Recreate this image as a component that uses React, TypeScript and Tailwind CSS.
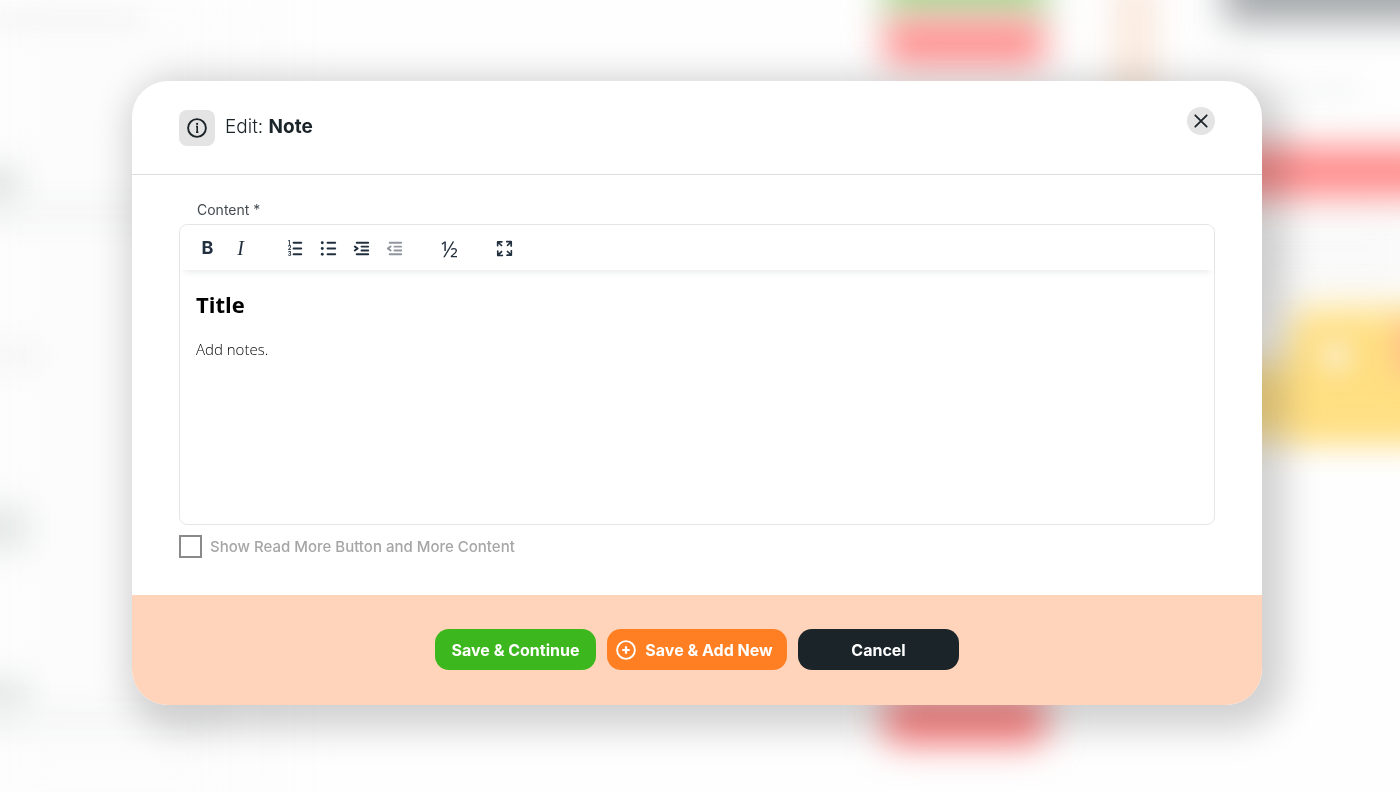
import React, { useState } from "react";

const Icon = ({ children }: { children: React.ReactNode }) => (
  <svg viewBox="0 0 24 24" className="size-[23px] fill-current" aria-hidden="true">
    {children}
  </svg>
);

function ToolButton({
  label,
  disabled,
  children,
}: {
  label: string;
  disabled?: boolean;
  children: React.ReactNode;
}) {
  return (
    <button
      type="button"
      aria-label={label}
      disabled={disabled}
      className="flex h-8 w-[33px] items-center justify-center rounded text-[#222f3e] disabled:opacity-50"
    >
      {children}
    </button>
  );
}

function Toolbar() {
  return (
    <div
      role="toolbar"
      className="flex h-[45px] items-center gap-[22px] rounded-t-lg px-[11px] pt-px shadow-[0_6px_6px_-4px_rgba(34,47,62,0.1)]"
    >
      <div className="flex">
        <ToolButton label="Bold">
          <span className="text-lg font-bold">B</span>
        </ToolButton>
        <ToolButton label="Italic">
          <span className="font-['Liberation_Serif',serif] text-xl italic">I</span>
        </ToolButton>
      </div>
      <div className="flex">
        <ToolButton label="Numbered list">
          <Icon>
            <path d="M10 17h8c.6 0 1 .4 1 1s-.4 1-1 1h-8a1 1 0 0 1 0-2Zm0-6h8c.6 0 1 .4 1 1s-.4 1-1 1h-8a1 1 0 0 1 0-2Zm0-6h8c.6 0 1 .4 1 1s-.4 1-1 1h-8a1 1 0 1 1 0-2Z" />
            <g fontSize="6" fontWeight="700">
              <text x="4" y="8">1</text>
              <text x="4" y="14">2</text>
              <text x="4" y="20">3</text>
            </g>
          </Icon>
        </ToolButton>
        <ToolButton label="Bullet list">
          <Icon>
            <path d="M11 5h8c.6 0 1 .4 1 1s-.4 1-1 1h-8a1 1 0 0 1 0-2Zm0 6h8c.6 0 1 .4 1 1s-.4 1-1 1h-8a1 1 0 0 1 0-2Zm0 6h8c.6 0 1 .4 1 1s-.4 1-1 1h-8a1 1 0 0 1 0-2Z" />
            <circle cx="5.5" cy="6" r="1.5" />
            <circle cx="5.5" cy="12" r="1.5" />
            <circle cx="5.5" cy="18" r="1.5" />
          </Icon>
        </ToolButton>
        <ToolButton label="Increase indent">
          <Icon>
            <path d="M7 5h12c.6 0 1 .4 1 1s-.4 1-1 1H7a1 1 0 1 1 0-2Zm5 4h7c.6 0 1 .4 1 1s-.4 1-1 1h-7a1 1 0 0 1 0-2Zm0 4h7c.6 0 1 .4 1 1s-.4 1-1 1h-7a1 1 0 0 1 0-2Zm-5 4h12a1 1 0 0 1 0 2H7a1 1 0 0 1 0-2Zm-2.6-3.8L6.2 12l-1.8-1.2a1 1 0 0 1 1.2-1.6l3 2a1 1 0 0 1 0 1.6l-3 2a1 1 0 1 1-1.2-1.6Z" />
          </Icon>
        </ToolButton>
        <ToolButton label="Decrease indent" disabled>
          <Icon>
            <path d="M7 5h12c.6 0 1 .4 1 1s-.4 1-1 1H7a1 1 0 1 1 0-2Zm5 4h7c.6 0 1 .4 1 1s-.4 1-1 1h-7a1 1 0 0 1 0-2Zm0 4h7c.6 0 1 .4 1 1s-.4 1-1 1h-7a1 1 0 0 1 0-2Zm-5 4h12a1 1 0 0 1 0 2H7a1 1 0 0 1 0-2Zm1.6-3.8a1 1 0 0 1-1.2 1.6l-3-2a1 1 0 0 1 0-1.6l3-2a1 1 0 0 1 1.2 1.6L6.8 12l1.8 1.2Z" />
          </Icon>
        </ToolButton>
      </div>
      <ToolButton label="Fraction">
        <span className="font-['Open_Sans',sans-serif] text-[22px]">½</span>
      </ToolButton>
      <ToolButton label="Fullscreen">
        <Icon>
          <path d="m15.3 10-1.2-1.3 2.9-3h-2.3a.9.9 0 1 1 0-1.7H19c.5 0 .9.4.9.9v4.4a.9.9 0 1 1-1.8 0V7l-2.9 3Zm0 4 3 3v-2.3a.9.9 0 1 1 1.7 0V19c0 .5-.4.9-.9.9h-4.4a.9.9 0 1 1 0-1.8H17l-3-2.9 1.3-1.2ZM10 15.4l-2.9 3h2.3a.9.9 0 1 1 0 1.7H5a.9.9 0 0 1-.9-.9v-4.4a.9.9 0 1 1 1.8 0V17l2.9-3 1.2 1.3ZM8.7 10 5.7 7v2.3a.9.9 0 0 1-1.7 0V5c0-.5.4-.9.9-.9h4.4a.9.9 0 0 1 0 1.8H7l3 2.9-1.3 1.2Z" />
        </Icon>
      </ToolButton>
    </div>
  );
}

// Blurred shapes of the page behind the dialog
function Backdrop() {
  return (
    <div aria-hidden="true" className="fixed inset-0 -z-10 overflow-hidden bg-[#fefefe]">
      <div className="absolute -top-10 -left-10 h-[880px] w-[300px] bg-[#fcfcfc] blur-2xl" />
      <div className="absolute top-4 -left-5 h-2 w-[160px] bg-[#eeeeee] blur-md" />
      <div className="absolute top-[168px] -left-8 h-10 w-[52px] bg-[#dfe4e2] blur-[16px]" />
      <div className="absolute top-[204px] -left-5 h-4 w-[200px] bg-[#f3f4f4] blur-[14px]" />
      <div className="absolute top-[346px] -left-5 h-5 w-[60px] bg-[#f4f4f4] blur-[14px]" />
      <div className="absolute top-[508px] -left-8 h-10 w-[60px] bg-[#e1e6e4] blur-[16px]" />
      <div className="absolute top-[680px] -left-8 h-9 w-[60px] bg-[#e1e6e4] blur-[16px]" />
      <div className="absolute top-[710px] -left-5 h-4 w-[240px] bg-[#f3f4f4] blur-[14px]" />
      <div className="absolute -top-10 right-[354px] h-[60px] w-[162px] rounded-xl bg-[#addb98] blur-[18px]" />
      <div className="absolute top-5 right-[354px] h-11 w-[162px] rounded-xl bg-[#ff8a8a] blur-[18px]" />
      <div className="absolute -top-5 right-[248px] h-[140px] w-[34px] bg-[#f9e4d5] blur-[18px]" />
      <div className="absolute -top-10 -right-10 h-[63px] w-[216px] bg-[#a5a9ab] blur-[18px]" />
      <div className="absolute top-[84px] right-[40px] h-3 w-[80px] bg-[#f1f3f2] blur-[14px]" />
      <div className="absolute top-[210px] -right-5 h-[90px] w-[200px] bg-[#f9f9f9] blur-xl" />
      <div className="absolute top-[147px] -right-10 h-[49px] w-[280px] bg-[#ff8787] blur-[18px]" />
      <div className="absolute top-[364px] -right-10 h-[74px] w-[280px] bg-[#ffe08a] blur-[18px]" />
      <div className="absolute top-[308px] -right-10 h-[126px] w-[152px] rounded-t-3xl bg-[#ffdf82] blur-[18px]" />
      <div className="absolute top-[340px] right-[48px] size-8 rounded-full bg-[#fbecc4] blur-[12px]" />
      <div className="absolute top-[324px] -right-7 h-12 w-7 bg-[#ffb08a] blur-[16px]" />
      <div className="absolute top-[696px] right-[354px] h-12 w-[162px] rounded-xl bg-[#ff8080] blur-[18px]" />
    </div>
  );
}

export default function App() {
  const [open, setOpen] = useState<boolean>(true);
  const [readMore, setReadMore] = useState<boolean>(false);

  const buttonClass =
    "flex h-[41px] items-center justify-center rounded-[14px] text-base font-bold text-white";

  return (
    <main className="isolate min-h-screen pt-[81px] pr-[138px] pb-[87px] pl-[132px] font-[Inter,sans-serif] text-[#1b2429]">
      <Backdrop />
      {open && (
        <section
          role="dialog"
          aria-labelledby="dialog-title"
          className="overflow-hidden rounded-[36px] bg-white shadow-[10px_10px_36px_14px_rgba(0,0,0,0.18)]"
        >
          <header className="flex items-start justify-between border-b border-[#dedede] px-[47px] pt-[26px] pb-7">
            <div className="flex items-center gap-[10px] pt-[3px]">
              <span className="flex size-9 items-center justify-center rounded-lg bg-[#e4e4e4]">
                <svg viewBox="0 0 20 20" className="size-5" fill="none" stroke="currentColor" aria-hidden="true">
                  <circle cx="10" cy="10" r="8.9" strokeWidth="1.9" />
                  <path d="M9 8.5h1.2v5.8M9 14.2h2.4" strokeWidth="1.6" />
                  <circle cx="10.1" cy="5.9" r="1.1" fill="currentColor" stroke="none" />
                </svg>
              </span>
              <h1 id="dialog-title" className="pb-[3px] text-[19px] leading-7 font-light">
                Edit: <b className="font-bold">Note</b>
              </h1>
            </div>
            <button
              type="button"
              aria-label="Close"
              onClick={() => setOpen(false)}
              className="flex size-7 items-center justify-center rounded-full bg-[#e4e4e4]"
            >
              <svg viewBox="0 0 14 14" className="size-[14px]" fill="none" stroke="currentColor" aria-hidden="true">
                <path d="m1.3 1.3 11.4 11.4M12.7 1.3 1.3 12.7" strokeWidth="1.8" strokeLinecap="round" />
              </svg>
            </button>
          </header>

          <div className="px-[47px] pt-[25px] pb-[37px]">
            <div id="content-label" className="mb-1 pl-[18px] text-sm leading-5 text-[#444b50]">
              Content *
            </div>
            <div className="rounded-lg border border-[#e6e6e6]">
              <Toolbar />
              <div
                role="textbox"
                aria-multiline="true"
                aria-labelledby="content-label"
                contentEditable
                suppressContentEditableWarning
                className="min-h-[254px] px-4 pt-[18px] font-['Open_Sans','Noto_Sans',sans-serif] text-black outline-none"
              >
                <h2 className="mb-[17px] text-[22px] leading-8 font-bold">Title</h2>
                <p className="text-[15px] leading-6 font-light text-black">Add notes.</p>
              </div>
            </div>
            <label className="mt-[10px] flex items-center gap-2 text-[15px] leading-[23px] font-medium text-[#a6a6a6]">
              <input
                type="checkbox"
                checked={readMore}
                onChange={() => setReadMore(!readMore)}
                className="size-[23px] appearance-none border-2 border-[#8a8a8a] checked:bg-[#3cb81e]"
              />
              Show Read More Button and More Content
            </label>
          </div>

          <footer className="flex justify-center gap-[11px] bg-[#ffd4ba] pt-[34px] pb-[35px]">
            <button type="button" className={`${buttonClass} w-[161px] bg-[#3cb81e]`}>
              Save &amp; Continue
            </button>
            <button type="button" className={`${buttonClass} w-[180px] gap-[9px] bg-[#ff7f22] pr-[5px]`}>
              <svg viewBox="0 0 20 20" className="size-5" fill="none" stroke="currentColor" aria-hidden="true">
                <circle cx="10" cy="10" r="8.9" strokeWidth="1.9" />
                <path d="M10 6.2v7.6M6.2 10h7.6" strokeWidth="2.2" />
              </svg>
              Save &amp; Add New
            </button>
            <button
              type="button"
              onClick={() => setOpen(false)}
              className={`${buttonClass} w-[161px] bg-[#1b2429]`}
            >
              Cancel
            </button>
          </footer>
        </section>
      )}
    </main>
  );
}
